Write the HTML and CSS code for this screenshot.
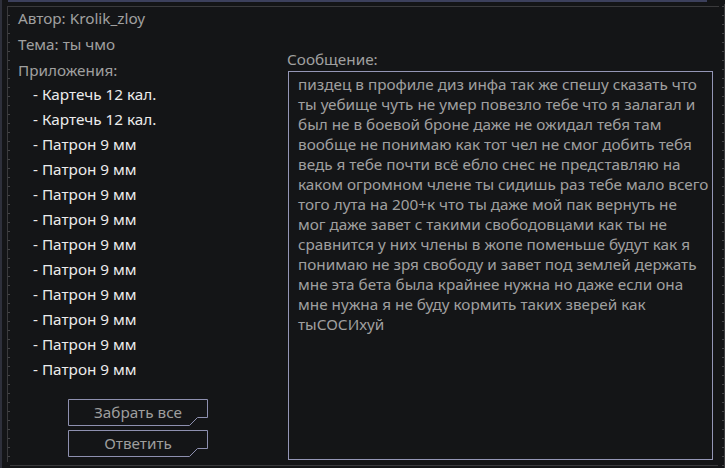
FILE: index.html
```html
<!DOCTYPE html>
<html lang="ru">
<head>
  <meta charset="UTF-8" />
  <title>Письмо</title>
  <link rel="stylesheet" href="styles.css">
</head>
<body>

  <div class="screen">
    <div class="main">
      <div class="accent"></div>

      <div class="frame">
        <div class="info">
          <div class="label">Автор: Krolik_zloy</div>
          <div class="label">Тема: ты чмо</div>
          <div class="label">Приложения:</div>

          <ul class="attachments">
            <li>- Картечь 12 кал.</li>
            <li>- Картечь 12 кал.</li>
            <li>- Патрон 9 мм</li>
            <li>- Патрон 9 мм</li>
            <li>- Патрон 9 мм</li>
            <li>- Патрон 9 мм</li>
            <li>- Патрон 9 мм</li>
            <li>- Патрон 9 мм</li>
            <li>- Патрон 9 мм</li>
            <li>- Патрон 9 мм</li>
            <li>- Патрон 9 мм</li>
            <li>- Патрон 9 мм</li>
          </ul>

          <button class="btn btn-first">
            <svg viewBox="0 0 140 27" width="140" height="27"><path d="M0.5 0.5H139.5V18.5H129.5L121.5 26.5H0.5Z"/></svg>
            <span>Забрать все</span>
          </button>
          <button class="btn">
            <svg viewBox="0 0 140 27" width="140" height="27"><path d="M0.5 0.5H139.5V18.5H129.5L121.5 26.5H0.5Z"/></svg>
            <span>Ответить</span>
          </button>
        </div>

        <div class="message">
          <div class="label">Сообщение:</div>
          <div class="message-box">пиздец в профиле диз инфа так же спешу сказать что<br>
ты уебище чуть не умер повезло тебе что я залагал и<br>
был не в боевой броне даже не ожидал тебя там<br>
вообще не понимаю как тот чел не смог добить тебя<br>
ведь я тебе почти всё ебло снес не представляю на<br>
каком огромном члене ты сидишь раз тебе мало всего<br>
того лута на 200+к что ты даже мой пак вернуть не<br>
мог даже завет с такими свободовцами как ты не<br>
сравнится у них члены в жопе поменьше будут как я<br>
понимаю не зря свободу и завет под землей держать<br>
мне эта бета была крайнее нужна но даже если она<br>
мне нужна я не буду кормить таких зверей как<br>
тыСОСИхуй</div>
        </div>
      </div>

      <div class="frame-bottom"></div>
    </div>

    <div class="ruler"></div>
  </div>

</body>
</html>
```
FILE: styles.css
```css
body {
  margin: 0;
  background: #141517;
  font-family: "Noto Sans", "Open Sans", sans-serif;
  font-size: 15.3px;
  color: #a0a0a0;
  overflow: hidden;
}



.screen {
  display: flex;
  width: 725px;
  height: 468px;
  border-left: 2px solid #2e303b;
  box-sizing: border-box;
}




.main {
  width: 716px;
  display: flex;
  flex-direction: column;
}




.accent {
  height: 2px;
  width: 699px;
  margin-left: 6px;
  background: #3c405c;
}




.frame {
  display: flex;
  margin-top: 4px;
  margin-left: 5px;
  width: 711px;
  height: 455px;
  border-top: 1px solid #3a3a3c;
  border-left: 1px solid #3a3a3c;
  background-image: linear-gradient(#444446 1px, transparent 1px);
  background-size: 2px 9px;
  background-repeat: repeat-y;
  background-position: 0 8px;
}




.frame-bottom {
  height: 1px;
  width: 708px;
  margin-top: 3px;
  margin-left: 8px;
  background: #3a3a3c;
}




.ruler {
  width: 2px;
  margin-left: 4px;
  margin-top: 4px;
  border-right: 1px solid #3a3a3c;
  background-image: linear-gradient(#444446 1px, transparent 1px);
  background-size: 2px 9px;
  background-position: 0 2px;
}




.label {
  line-height: 22px;
  margin-bottom: 4px;
  white-space: nowrap;
}




.info {
  width: 269px;
  padding-left: 10px;
  display: flex;
  flex-direction: column;
  align-items: flex-start;
}




.attachments {
  list-style: none;
  margin: -3px 0 0;
  padding: 0 0 0 15px;
  color: #ececec;
}




.attachments li {
  line-height: 25px;
  white-space: nowrap;
}




.btn {
  position: relative;
  width: 140px;
  height: 27px;
  margin: 4px 0 0 50px;
  padding: 0;
  border: none;
  background: none;
  font: inherit;
  color: #9e9e9e;
  cursor: pointer;
}




.btn-first {
  margin-top: 17px;
}




.btn svg {
  position: absolute;
  left: 0;
  top: 0;
}




.btn svg path {
  fill: none;
  stroke: #8e90b0;
  stroke-width: 1;
}




.btn span {
  position: relative;
  display: block;
  line-height: 25px;
}




.message {
  width: 432px;
  padding-top: 42px;
}




.message .label {
  line-height: 20px;
  margin-bottom: 2px;
}




.message-box {
  width: 409px;
  height: 385px;
  margin-left: 1px;
  padding: 2px 5px 0 9px;
  box-sizing: content-box;
  border: 1px solid #9496b6;
  line-height: 20px;
  white-space: nowrap;
  color: #a0a0a0;
}
```
